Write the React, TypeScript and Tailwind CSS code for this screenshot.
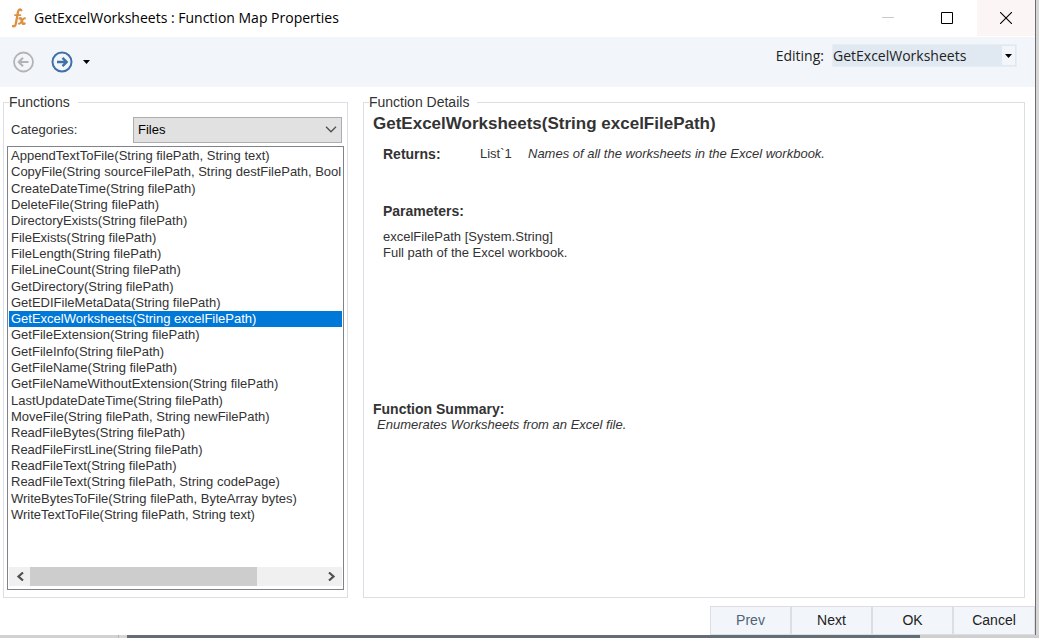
import { useState } from 'react'

const functions = [
  'AppendTextToFile(String filePath, String text)',
  'CopyFile(String sourceFilePath, String destFilePath, Bool',
  'CreateDateTime(String filePath)',
  'DeleteFile(String filePath)',
  'DirectoryExists(String filePath)',
  'FileExists(String filePath)',
  'FileLength(String filePath)',
  'FileLineCount(String filePath)',
  'GetDirectory(String filePath)',
  'GetEDIFileMetaData(String filePath)',
  'GetExcelWorksheets(String excelFilePath)',
  'GetFileExtension(String filePath)',
  'GetFileInfo(String filePath)',
  'GetFileName(String filePath)',
  'GetFileNameWithoutExtension(String filePath)',
  'LastUpdateDateTime(String filePath)',
  'MoveFile(String filePath, String newFilePath)',
  'ReadFileBytes(String filePath)',
  'ReadFileFirstLine(String filePath)',
  'ReadFileText(String filePath)',
  'ReadFileText(String filePath, String codePage)',
  'WriteBytesToFile(String filePath, ByteArray bytes)',
  'WriteTextToFile(String filePath, String text)',
]

function TitleBar() {
  return (
    <header className="flex h-[37px] items-stretch bg-white font-['Open_Sans',sans-serif] text-[14px] text-black">
      <div className="flex flex-1 items-center gap-2 pb-0.5 pl-3">
        <svg className="h-5 w-[14px]" viewBox="0 0 14 20" fill="none" stroke="#dc9142" strokeLinecap="round" strokeLinejoin="round">
          <path d="M9.3 2.2C7.8 .7 6.4 1.8 6 4L3.8 15.8C3.4 18.2 2.2 18.9 1 18" strokeWidth="2.3" />
          <path d="M3 7.2h5.4" strokeWidth="1.8" />
          <path d="M7.6 10.4c1.8-.5 1.9.8 2.4 3.2.4 1.8 1 2.600 2.400 2" strokeWidth="2.5" />
          <path d="M12.900 10.300c-1.800-.2-2.400 1.700-3.100 3-.7 1.300-1.300 2.600-2.900 2.400" strokeWidth="2" />
        </svg>
        <h1>GetExcelWorksheets : Function Map Properties</h1>
      </div>
      <button aria-label="Minimize" className="flex w-[59px] items-center justify-center pb-0.5">
        <svg className="h-3 w-3" viewBox="0 0 12 12" stroke="#c9c9c9">
          <path d="M0 5.500h12" />
        </svg>
      </button>
      <button aria-label="Maximize" className="flex w-[60px] items-center justify-center pb-0.5">
        <svg className="h-3 w-3" viewBox="0 0 12 12" fill="none" stroke="black">
          <path d="M.5.5h11v11H.5z" />
        </svg>
      </button>
      <button aria-label="Close" className="mb-px flex w-[58px] items-center justify-center bg-[#fcf5f5]">
        <svg className="h-3 w-3" viewBox="0 0 12 12" stroke="black" strokeWidth="1.1">
          <path d="M0 0l12 12M12 0L0 12" />
        </svg>
      </button>
    </header>
  )
}

function Toolbar() {
  return (
    <div className="flex h-[50px] items-start bg-[#f2f6fa] pr-[18px] pl-3 font-['Open_Sans',sans-serif] text-[14px] text-[#222]">
      <div className="flex h-full flex-1 items-center">
        <button aria-label="Back" className="text-[#b4b4b4]">
          <svg className="h-[22px] w-[23px]" viewBox="0 0 22 22" fill="none" stroke="currentColor">
            <circle cx="11" cy="11" r="9.500" strokeWidth="1.800" />
            <path d="M16 11H6.500M10.500 6.800L6.300 11l4.200 4.200" strokeWidth="2.200" />
          </svg>
        </button>
        <button aria-label="Forward" className="ml-4 text-[#3f70a8]">
          <svg className="h-[22px] w-[22px]" viewBox="0 0 22 22" fill="none" stroke="currentColor">
            <circle cx="11" cy="11" r="9.500" strokeWidth="2" />
            <path d="M6 11h9.500M11.500 6.800l4.200 4.200-4.200 4.200" strokeWidth="2.400" />
          </svg>
        </button>
        <button aria-label="History" className="ml-2.5">
          <svg className="h-1 w-[7px]" viewBox="0 0 7 4" fill="black">
            <path d="M0 0h7L3.500 4z" />
          </svg>
        </button>
      </div>
      <div className="flex items-center gap-2 pt-[7px]">
        <label htmlFor="editing">Editing:</label>
        <div className="relative">
          <select
            id="editing"
            className="block h-[23px] w-[185px] appearance-none border border-[#e6edf3] bg-[#e0e9f1] outline-none"
          >
            <option>GetExcelWorksheets</option>
          </select>
          <span className="pointer-events-none absolute inset-y-0.5 right-0.5 flex w-[13px] items-center justify-center bg-[#f2f6fa]">
            <svg className="h-1 w-[7px]" viewBox="0 0 7 4" fill="black">
              <path d="M0 0h7L3.500 4z" />
            </svg>
          </span>
        </div>
      </div>
    </div>
  )
}

function FunctionList() {
  const [selected, setSelected] = useState(10)

  return (
    <fieldset className="flex w-[345px] shrink-0 flex-col border border-[#dadfe3] px-[3px] pb-[7px]">
      <legend className="ml-0.5 pr-2 text-[14px] leading-4">Functions</legend>
      <div className="flex items-center pt-[7px] pr-0.5 pl-1">
        <label htmlFor="category" className="flex-1">Categories:</label>
        <div className="relative">
          <select
            id="category"
            className="block h-[26px] w-[209px] appearance-none border border-[#adadad] bg-[#e1e1e1] pl-1 text-black outline-none"
          >
            <option>Files</option>
          </select>
          <svg className="pointer-events-none absolute top-[9px] right-[5px] h-[7px] w-3" viewBox="0 0 12 7" fill="none" stroke="#505050" strokeWidth="1.300">
            <path d="M1 .8l5 5 5-5" />
          </svg>
        </div>
      </div>
      <div className="mt-[3px] flex flex-1 flex-col border border-[#7f848c] p-px">
        <div role="listbox" aria-label="Functions" className="grid h-[375px] auto-rows-fr overflow-hidden">
          {functions.map((name, i) => (
            <button
              key={name}
              role="option"
              aria-selected={i === selected}
              onClick={() => setSelected(i)}
              className={
                i === selected
                  ? 'bg-[#0078d7] pl-0.5 text-left leading-4 whitespace-nowrap text-white'
                  : 'pl-0.5 text-left leading-4 whitespace-nowrap'
              }
            >
              {name}
            </button>
          ))}
        </div>
        <div className="mt-auto mb-0.5 flex h-[19px] bg-[#f0f0f0]">
          <button aria-label="Scroll left" className="flex w-[21px] items-center justify-center">
            <svg className="h-[9px] w-2" viewBox="0 0 8 9" fill="none" stroke="#505050" strokeWidth="2.200">
              <path d="M7 .5l-4.500 4 4.500 4" />
            </svg>
          </button>
          <div className="flex-1">
            <div className="h-full w-[78%] bg-[#cdcdcd]" />
          </div>
          <button aria-label="Scroll right" className="flex w-[21px] items-center justify-center">
            <svg className="h-[9px] w-2" viewBox="0 0 8 9" fill="none" stroke="#505050" strokeWidth="2.200">
              <path d="M1 .5l4.500 4-4.500 4" />
            </svg>
          </button>
        </div>
      </div>
    </fieldset>
  )
}

function FunctionDetails() {
  return (
    <fieldset className="min-w-0 flex-1 border border-[#dadfe3] px-[9px]">
      <legend className="-ml-1 pr-2 text-[14px] leading-4">Function Details</legend>
      <h2 className="pt-1 text-[17px] leading-5 font-bold">GetExcelWorksheets(String excelFilePath)</h2>
      <div className="flex pt-2.5 pl-2.5 leading-5">
        <h3 className="w-[97px] text-[14px] font-bold">Returns:</h3>
        <span className="w-12">List`1</span>
        <em>Names of all the worksheets in the Excel workbook.</em>
      </div>
      <h3 className="pt-[37px] pl-2.5 text-[14px] leading-5 font-bold">Parameters:</h3>
      <p className="pt-2 pl-2.5 leading-4">
        excelFilePath [System.String]
        <br />
        Full path of the Excel workbook.
      </p>
      <h3 className="pt-[140px] text-[14px] leading-4 font-bold">Function Summary:</h3>
      <p className="pl-1 leading-4 italic">Enumerates Worksheets from an Excel file.</p>
    </fieldset>
  )
}

function FooterButton({ label, disabled }: { label: string; disabled?: boolean }) {
  return (
    <button
      disabled={disabled}
      className="w-[81px] border-r-2 border-[#dadfe3] bg-[#f2f6fa] text-[14px] text-[#222] last:border-r disabled:text-[#4f6478]"
    >
      {label}
    </button>
  )
}

export default function App() {
  return (
    <div className="flex min-h-screen flex-col bg-[#d6d6d6] font-['Liberation_Sans',Arial,sans-serif] text-[13px] text-[#333]">
      <div className="mr-[3px] flex flex-1 flex-col border-r border-[#6e6e6e] bg-white">
        <TitleBar />
        <Toolbar />
        <main className="flex flex-1 gap-[15px] pt-[7px] pr-2.5 pl-[3px]">
          <FunctionList />
          <FunctionDetails />
        </main>
        <footer className="mt-2 flex h-[29px] justify-end">
          <div className="flex border border-r-0 border-[#dadfe3]">
            <FooterButton label="Prev" disabled />
            <FooterButton label="Next" />
            <FooterButton label="OK" />
            <FooterButton label="Cancel" />
          </div>
        </footer>
      </div>
      {/* edge of the application window behind the dialog */}
      <div className="flex h-[3px]">
        <div className="w-[119px] border-r border-[#b5b5b5] bg-[#d2d2d2]" />
        <div className="ml-2 flex-1 bg-[#626d78]" />
        <div className="w-[119px] bg-[#cfcfcf]" />
      </div>
    </div>
  )
}
